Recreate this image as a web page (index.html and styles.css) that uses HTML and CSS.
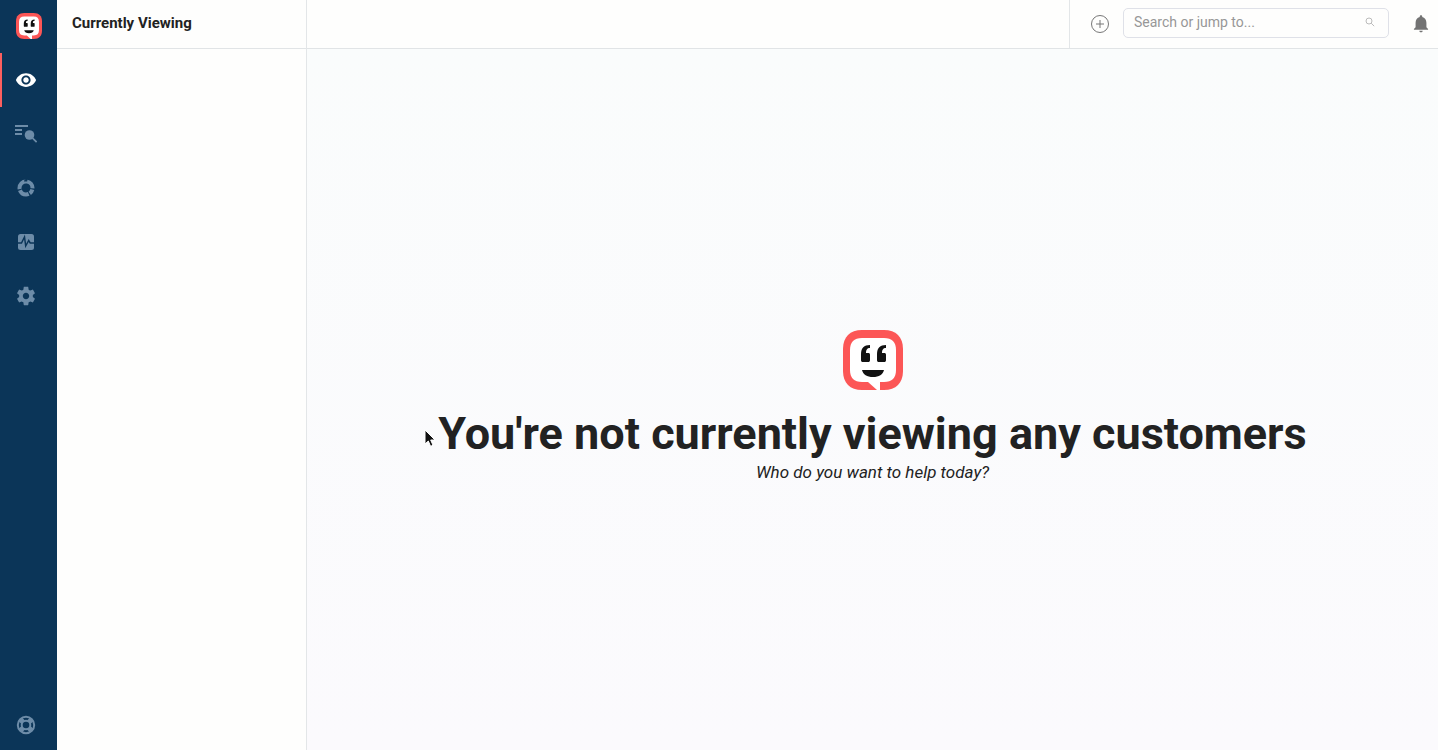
FILE: index.html
```html
<!DOCTYPE html>
<html lang="en">
<head>
  <meta charset="UTF-8">
  <title>Currently Viewing</title>
  <link rel="stylesheet" href="styles.css">
</head>
<body>

  <!-- shared logo, used in the sidebar and the empty state -->
  <svg class="defs" aria-hidden="true">
    <symbol id="logo" viewBox="0 0 60 60">
      <path fill="#fc5656" d="M19 0h22c12 0 19 7 19 19v22c0 12-7 19-19 19H19C7 60 0 53 0 41V19C0 7 7 0 19 0z"/>
      <path fill="#fff" d="M19 8h22c8 0 12 4 12 12v20c0 8-4 12-12 12h-4v8h-3l-9-8h-6c-8 0-12-4-12-12V20c0-8 4-12 12-12z"/>
      <path fill="#111" d="M27 15v3c-3 0-4 2-4 5h2c1.500 0 2 .6 2 2v5c0 1.400-.6 2-2 2h-5c-1.400 0-2-.6-2-2v-6c0-6 3-9 9-9zM43 15v3c-3 0-4 2-4 5h2c1.500 0 2 .6 2 2v5c0 1.400-.6 2-2 2h-5c-1.400 0-2-.6-2-2v-6c0-6 3-9 9-9zM19 40h22c-1 4.500-5 7-11 7s-10-2.500-11-7z"/>
    </symbol>
  </svg>

  <div class="app">
    <nav class="sidebar">
      <a class="brand" href="#" aria-label="Home"><svg width="26" height="26"><use href="#logo"/></svg></a>

      <a class="nav-item active" href="#" aria-label="Currently viewing">
        <svg width="22" height="22" viewBox="0 0 24 24"><path d="M12 4.500C7 4.500 2.730 7.610 1 12c1.730 4.390 6 7.500 11 7.500s9.270-3.110 11-7.500c-1.730-4.390-6-7.500-11-7.500zM12 17c-2.760 0-5-2.240-5-5s2.240-5 5-5 5 2.240 5 5-2.240 5-5 5zm0-8c-1.660 0-3 1.340-3 3s1.340 3 3 3 3-1.340 3-3-1.340-3-3-3z"/></svg>
      </a>
      <a class="nav-item" href="#" aria-label="Search list">
        <svg width="22" height="22" viewBox="0 0 22 22"><path d="M0 2h13v2H0zM0 6h7v2H0zM0 10h7v2H0z"/><circle cx="14.500" cy="12" r="4.800"/><path d="M17 15.700l1.200-1.200 4 4-1.200 1.200z"/></svg>
      </a>
      <a class="nav-item" href="#" aria-label="Segments">
        <svg width="22" height="22" viewBox="0 0 22 22"><circle class="ring" cx="11" cy="11" r="6.500" pathLength="100" stroke-dasharray="11 3 26 3 28 3 23 3" stroke-dashoffset="-4"/></svg>
      </a>
      <a class="nav-item" href="#" aria-label="Activity">
        <svg width="22" height="22" viewBox="0 0 22 22"><rect x="3" y="3" width="16" height="16" rx="2.500"/><path class="pulse" d="M3 12h3.500L9.500 6l1.200 9 3-5.500 1.500 2.500H19"/></svg>
      </a>
      <a class="nav-item" href="#" aria-label="Settings">
        <svg width="22" height="22" viewBox="0 0 24 24"><path d="M19.430 12.980c.04-.32.07-.64.07-.98s-.03-.66-.07-.98l2.110-1.650c.19-.15.240-.42.120-.64l-2-3.460c-.12-.22-.39-.3-.61-.22l-2.490 1c-.52-.4-1.080-.73-1.690-.98l-.38-2.650C14.460 2.180 14.250 2 14 2h-4c-.25 0-.46.180-.49.420l-.38 2.650c-.61.250-1.170.59-1.690.98l-2.490-1c-.23-.09-.49 0-.61.220l-2 3.460c-.13.220-.07.490.120.640l2.110 1.650c-.04.320-.07.650-.07.980s.03.660.07.980l-2.110 1.650c-.19.150-.24.420-.12.640l2 3.460c.12.220.39.300.61.220l2.490-1c.52.400 1.080.730 1.690.980l.38 2.650c.03.240.240.420.49.420h4c.25 0 .46-.18.49-.42l.38-2.650c.61-.25 1.170-.59 1.690-.98l2.490 1c.23.090.49 0 .61-.22l2-3.460c.12-.22.070-.49-.12-.64l-2.110-1.650zM12 15.500c-1.930 0-3.500-1.570-3.500-3.500s1.570-3.500 3.500-3.500 3.500 1.570 3.500 3.500-1.570 3.500-3.500 3.500z"/></svg>
      </a>
      <a class="nav-item help" href="#" aria-label="Help">
        <svg width="22" height="22" viewBox="0 0 22 22"><circle class="buoy" cx="11" cy="11" r="8.200"/><circle class="buoy" cx="11" cy="11" r="4.300"/><path class="spokes" d="M5.500 5.500l2.700 2.700M16.500 5.500l-2.700 2.700M5.500 16.500l2.700-2.700M16.500 16.500l-2.700-2.700"/></svg>
      </a>
    </nav>

    <aside class="panel">
      <header class="panel-header"><h2>Currently Viewing</h2></header>
    </aside>

    <div class="content">
      <header class="topbar">
        <div class="tools">
          <button class="icon-button" type="button" aria-label="Add">
            <svg width="20" height="20" viewBox="0 0 20 20"><path class="line" d="M10 6v8M6 10h8"/><circle class="line" cx="10" cy="10" r="8.500"/></svg>
          </button>
          <form class="search">
            <input type="search" placeholder="Search or jump to..." aria-label="Search">
            <svg width="10" height="10" viewBox="0 0 10 10"><circle cx="4" cy="4" r="3"/><path d="M6.200 6.200L9.200 9.200"/></svg>
          </form>
          <button class="icon-button" type="button" aria-label="Notifications">
            <svg width="20" height="20" viewBox="0 0 24 24"><path fill="#737373" d="M12 22c1.100 0 2-.9 2-2h-4c0 1.100.9 2 2 2zm6.500-6v-5.500c0-3.300-1.900-6-5-6.800V3c0-.8-.7-1.500-1.500-1.500S10.500 2.200 10.500 3v.7c-3.200.8-5 3.500-5 6.800V16l-2 2v1h17v-1z"/></svg>
          </button>
        </div>
      </header>

      <main class="empty">
        <svg width="60" height="60"><use href="#logo"/></svg>
        <h1>You're not currently viewing any customers</h1>
        <p>Who do you want to help today?</p>
      </main>
    </div>
  </div>

  <svg class="cursor" width="14" height="20" viewBox="0 0 14 20" aria-hidden="true"><path d="M1 1v14l3.300-3 2.300 5.300 2.400-1-2.300-5.300H11z"/></svg>

</body>
</html>
```
FILE: styles.css
```css
* {
  box-sizing: border-box;
}

body {
  margin: 0;
  background: #fefefd;
  color: #222;
  font-family: Roboto, "Liberation Sans", sans-serif;
}

h1,
h2,
p {
  margin: 0;
}

svg {
  display: block;
}

.defs {
  display: none;
}

.app {
  display: flex;
  min-height: 100vh;
}

/* Sidebar */
.sidebar {
  display: flex;
  flex-direction: column;
  width: 57px;
  background: #0b3558;
}

.brand {
  display: flex;
  justify-content: center;
  padding: 13px 0 14px;
}

.nav-item {
  display: flex;
  align-items: center;
  height: 54px;
  padding-left: 13px;
  border-left: 2px solid transparent;
  fill: #6d8ca8;
}

.nav-item.active {
  border-color: #fc5f5f;
  fill: #fff;
}

.help {
  height: 50px;
  margin-top: auto;
}

.ring {
  fill: none;
  stroke: #6d8ca8;
  stroke-width: 4;
}

.pulse {
  fill: none;
  stroke: #0b3558;
  stroke-width: 1.5;
}

.buoy {
  fill: none;
  stroke: #6d8ca8;
  stroke-width: 2;
}

.spokes {
  stroke: #6d8ca8;
  stroke-width: 5;
}

/* Customer list */
.panel {
  width: 250px;
  border-right: 1px solid #e3e6e8;
}

.panel-header,
.topbar {
  display: flex;
  height: 49px;
  border-bottom: 1px solid #e1e4e6;
}

.panel-header {
  align-items: center;
  padding: 0 15px 2px;
}

.panel-header h2 {
  font-size: 15px;
}

/* Main area */
.content {
  display: flex;
  flex: 1;
  flex-direction: column;
}

.topbar {
  justify-content: flex-end;
}

.tools {
  display: flex;
  align-items: center;
  padding: 0 7px 0 20px;
  border-left: 1px solid #e3e6e8;
}

.icon-button {
  padding: 0;
  border: 0;
  background: none;
  cursor: pointer;
}

.line {
  fill: none;
  stroke: #777;
}

.search {
  display: flex;
  align-items: center;
  width: 266px;
  height: 30px;
  margin: 0 22px 2px 13px;
  padding: 0 13px 2px 10px;
  border: 1px solid #dfe1e8;
  border-radius: 5px;
}

.search input {
  flex: 1;
  min-width: 0;
  padding: 0;
  border: 0;
  outline: 0;
  background: none;
  font-family: inherit;
  font-size: 14px;
}

.search input::placeholder {
  color: #979797;
}

.search svg {
  fill: none;
  stroke: #bbb;
}

.empty {
  display: flex;
  flex: 1;
  flex-direction: column;
  align-items: center;
  justify-content: center;
  padding-top: 14px;
  background: linear-gradient(#fafcfc, #fbfafd);
  text-align: center;
}

.empty h1 {
  margin-top: 18px;
  font-size: 45px;
  line-height: 52px;
}

.empty p {
  font-size: 17px;
  line-height: 24px;
  font-style: italic;
}

/* Mouse pointer */
.cursor {
  position: absolute;
  top: 429px;
  left: 424px;
  fill: #111;
  stroke: #fff;
}
```
